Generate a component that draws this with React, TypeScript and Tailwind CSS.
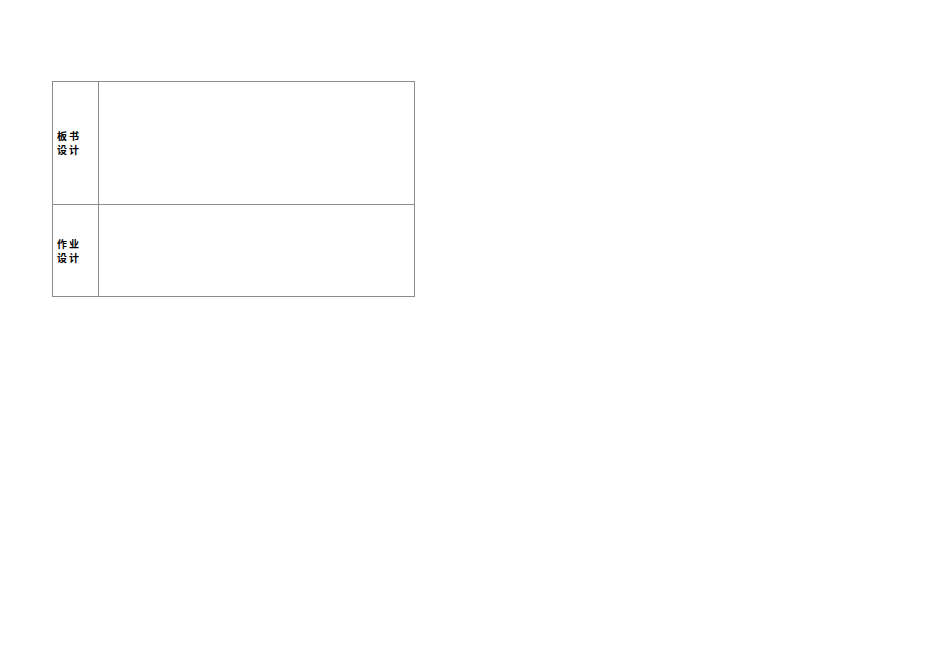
import React from 'react';

type RowProps = {
    label: string[],
    height: string,
    last?: boolean
}

const Row = ({label, height, last}: RowProps) => {
    return (
        <div className={`flex ${height} ${last ? '' : 'border-b border-[#8c8c8c]'}`}>
            <div className="w-[46px] shrink-0 border-r border-[#8c8c8c] flex flex-col justify-center pl-[4px]">
                {label.map((line) => (
                    <span key={line} className="text-[10px] leading-[14px] tracking-[2px] font-semibold text-black">{line}</span>
                ))}
            </div>
            <div className="flex-1"></div>
        </div>
    );
};

const App = () => {
    return (
        <div className="w-[950px] h-[658px] bg-white pt-[81px] pl-[52px] font-['Noto_Sans_CJK_SC',sans-serif]">
            <div className="w-[363px] border border-[#8c8c8c] flex flex-col">
                <Row label={['板书', '设计']} height="h-[123px]" />
                <Row label={['作业', '设计']} height="h-[91px]" last />
            </div>
        </div>
    );
};

export default App;
